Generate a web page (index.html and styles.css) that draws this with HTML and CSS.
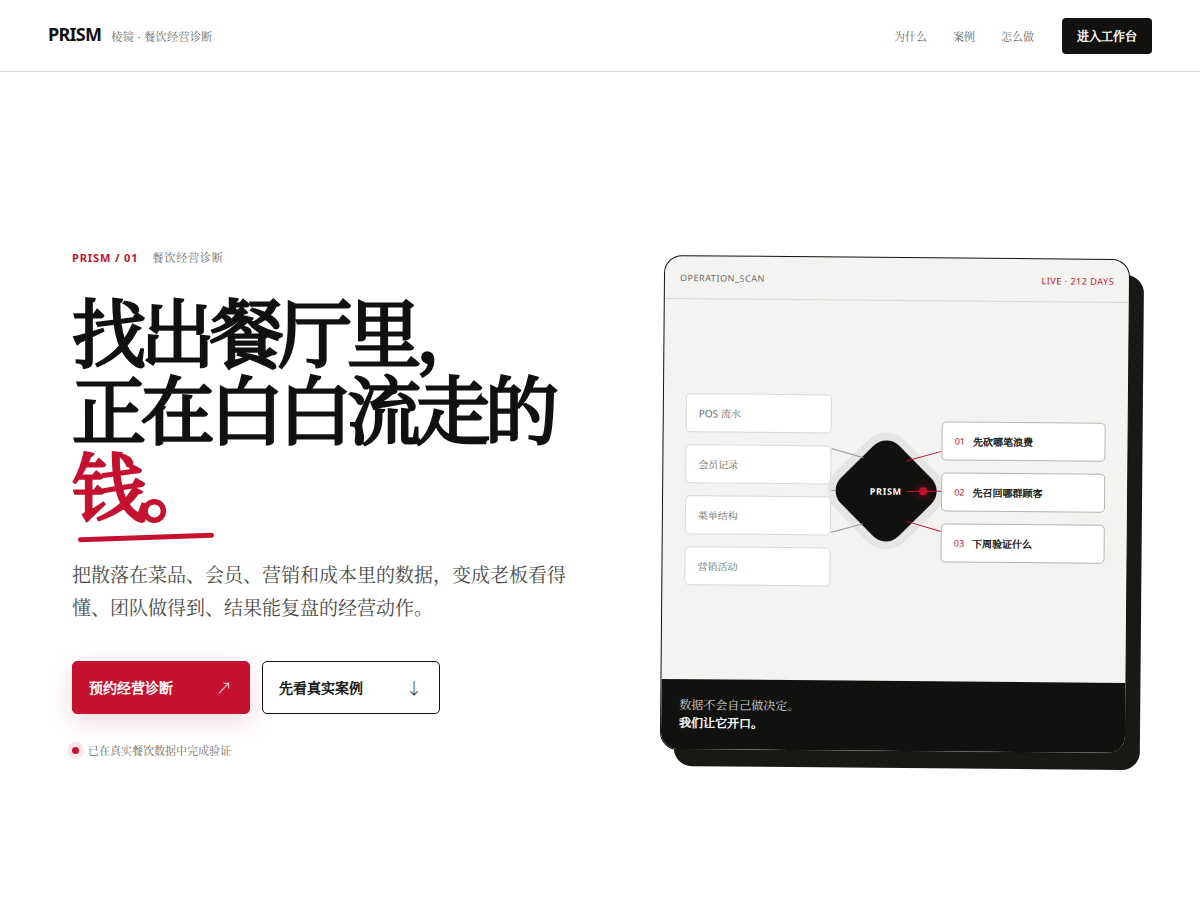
FILE: index.html
```html
<!DOCTYPE html>
<html lang="zh-CN">
<head>
  <meta charset="UTF-8">
  <meta name="viewport" content="width=device-width, initial-scale=1">
  <title>PRISM 棱镜 · 餐饮经营诊断</title>
  <link rel="stylesheet" href="styles.css">
</head>
<body>

  <header class="topbar">
    <a class="brand" href="#"><strong>PRISM</strong><span>棱镜 · 餐饮经营诊断</span></a>
    <nav class="nav">
      <a href="#why">为什么</a>
      <a href="#cases">案例</a>
      <a href="#how">怎么做</a>
      <a class="nav-cta" href="#app">进入工作台</a>
    </nav>
  </header>

  <main class="hero">
    <section class="copy">
      <p class="eyebrow"><b>PRISM / 01</b><span>餐饮经营诊断</span></p>
      <h1>找出餐厅里，<br>正在白白流走的<em>钱。</em></h1>
      <p class="lead">把散落在菜品、会员、营销和成本里的数据，变成老板看得懂、团队做得到、结果能复盘的经营动作。</p>
      <div class="actions">
        <a class="btn btn-primary" href="#book">预约经营诊断<span>↗</span></a>
        <a class="btn btn-outline" href="#cases">先看真实案例<span>↓</span></a>
      </div>
      <p class="proof"><i></i>已在真实餐饮数据中完成验证</p>
    </section>

    <section class="scan">
      <div class="scan-head"><span>OPERATION_SCAN</span><span class="live">LIVE · 212 DAYS</span></div>
      <div class="scan-body">
        <ul class="sources">
          <li>POS 流水</li>
          <li>会员记录</li>
          <li>菜单结构</li>
          <li>营销活动</li>
        </ul>
        <div class="core">
          <div class="diamond"><b>PRISM</b></div>
          <svg class="wires" viewBox="0 0 110 110" fill="none">
            <g stroke="#999">
              <path d="M0 13 L32 22"/>
              <path d="M0 55 H4"/>
              <path d="M0 97 L32 88"/>
            </g>
            <g stroke="#c41230">
              <path d="M75 25 L110 15"/>
              <path d="M75 55.5 L110 54.9"/>
              <path d="M75 85 L110 95"/>
            </g>
          </svg>
          <i class="pulse"></i>
        </div>
        <ol class="results">
          <li><span>01</span><b>先砍哪笔浪费</b></li>
          <li><span>02</span><b>先召回哪群顾客</b></li>
          <li><span>03</span><b>下周验证什么</b></li>
        </ol>
      </div>
      <div class="scan-foot">数据不会自己做决定。<br><b>我们让它开口。</b></div>
    </section>
  </main>

</body>
</html>
```
FILE: styles.css
```css
* {
  box-sizing: border-box;
}

body {
  margin: 0;
  background: #fff;
  color: #11110f;
  font-family: "Noto Sans", "Noto Serif CJK SC", serif;
}

a {
  color: inherit;
  text-decoration: none;
}

p, h1, ul, ol {
  margin: 0;
  padding: 0;
}

ul, ol {
  list-style: none;
}

/* even, heavier strokes for the Chinese headings and labels */
h1, .nav-cta, .btn, .results b, .scan-foot b {
  font-weight: 400;
  -webkit-text-stroke: 0.04em currentColor;
}

/* Top bar */
.topbar {
  display: flex;
  align-items: center;
  justify-content: space-between;
  height: 72px;
  padding: 0 48px;
  border-bottom: 1px solid #d8d8d6;
}

.brand {
  display: flex;
  align-items: baseline;
  gap: 10px;
  line-height: 20px;
}

.brand strong {
  font-size: 18px;
  letter-spacing: -0.04em;
}

.brand span {
  font-size: 11px;
  letter-spacing: 0.04em;
  color: #6b6b68;
}

.nav {
  display: flex;
  align-items: center;
  gap: 26px;
  font-size: 11px;
  color: #6b6b68;
}

.nav-cta {
  display: flex;
  align-items: center;
  height: 36px;
  margin-left: 2px;
  padding: 0 15px;
  border-radius: 4px;
  background: #11110f;
  color: #fff;
  font-size: 12px;
}

/* Hero */
.hero {
  display: grid;
  grid-template-columns: 53fr 47fr;
  gap: 64px;
  align-items: center;
  min-height: calc(100vh - 72px);
  padding: 36px 72px 0;
}

.eyebrow {
  display: flex;
  align-items: center;
  gap: 14px;
  font-size: 11px;
  line-height: 16px;
  letter-spacing: 0.08em;
  color: #6b6b68;
}

.eyebrow b {
  color: #c41230;
}

h1 {
  margin-top: 28px;
  font-size: 74px;
  line-height: 77px;
  letter-spacing: -0.07em;
}

h1 em {
  position: relative;
  display: inline-block;
  color: #c41230;
  font-style: normal;
}

h1 em::after {
  content: "";
  position: absolute;
  left: 6px;
  right: -4px;
  bottom: -15px;
  height: 5px;
  border-radius: 3px;
  background: #c41230;
  transform: rotate(-2deg);
}

.lead {
  max-width: 510px;
  margin-top: 34px;
  font-size: 19px;
  line-height: 33px;
  color: #4a4a47;
}

.actions {
  display: flex;
  gap: 12px;
  margin-top: 36px;
}

.btn {
  display: flex;
  align-items: center;
  justify-content: space-between;
  width: 178px;
  height: 53px;
  padding: 0 17px 0 16px;
  border: 1px solid #11110f;
  border-radius: 5px;
  font-size: 14px;
}

.btn span {
  font-size: 16px;
  -webkit-text-stroke: 0;
}

.btn-primary {
  border-color: #c41230;
  background: #c41230;
  color: #fff;
  box-shadow: 0 8px 24px rgba(196, 18, 48, 0.16);
}

.proof {
  display: flex;
  align-items: center;
  gap: 9px;
  margin-top: 29px;
  font-size: 11px;
  line-height: 16px;
  color: #6b6b68;
}

.proof i {
  width: 7px;
  height: 7px;
  border-radius: 50%;
  background: #c41230;
  box-shadow: 0 0 0 5px #fbe7ea;
}

/* Scan card */
.scan {
  overflow: hidden;
  border: 1px solid #11110f;
  border-radius: 18px;
  background: #f3f3f1;
  box-shadow: 14px 16px 0 #1a1814;
  transform: rotate(0.5deg);
}

.scan-head {
  display: flex;
  align-items: center;
  justify-content: space-between;
  height: 43px;
  padding: 0 15px;
  border-bottom: 1px solid #d8d8d6;
  font-size: 9px;
  letter-spacing: 0.06em;
  color: #6b6b68;
}

.live {
  color: #c41230;
}

.scan-body {
  display: grid;
  grid-template-columns: 146fr 110fr 164fr;
  align-items: center;
  height: 380px;
  padding: 0 22px;
}

.sources, .results {
  display: grid;
  gap: 12px;
}

.results {
  position: relative;
  z-index: 1;
}

.sources li, .results li {
  display: flex;
  align-items: center;
  gap: 8px;
  height: 39px;
  padding: 0 12px;
  border: 1px solid #d8d8d6;
  border-radius: 5px;
  background: #fff;
  font-size: 10px;
  color: #6b6b68;
}

.results li {
  border-color: #b5b5b2;
  color: #11110f;
}

.results span {
  font-size: 9px;
  color: #c41230;
}

.core {
  position: relative;
  display: grid;
  place-items: center;
}

.diamond {
  display: grid;
  place-items: center;
  width: 82px;
  height: 82px;
  border-radius: 18px;
  background: #11110f;
  box-shadow: 0 0 0 8px #e5e5e3;
  color: #fff;
  font-size: 9px;
  letter-spacing: 0.08em;
  transform: rotate(45deg);
}

.diamond b {
  transform: rotate(-45deg);
}

.wires {
  position: absolute;
  top: 50%;
  left: 0;
  width: 100%;
  transform: translateY(-50%);
}

.pulse {
  position: absolute;
  right: 14px;
  width: 8px;
  height: 8px;
  border-radius: 50%;
  background: #c41230;
  box-shadow: 0 0 8px #c41230;
}

.scan-foot {
  padding: 17px 18px;
  background: #11110f;
  color: #d8d8d6;
  font-size: 12px;
  line-height: 18px;
}

.scan-foot b {
  color: #fff;
}
```
